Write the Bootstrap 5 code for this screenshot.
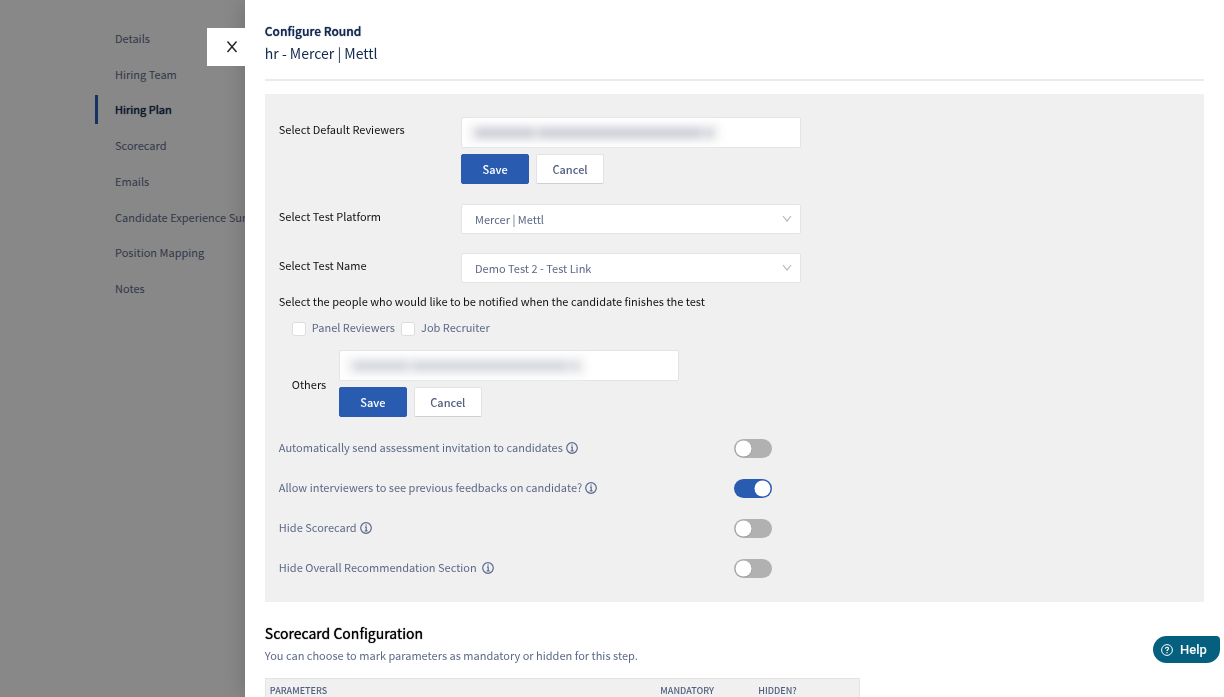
<!DOCTYPE html>
<html lang="en">
<head>
<meta charset="utf-8">
<meta name="viewport" content="width=device-width, initial-scale=1">
<title>Configure Round</title>
<link href="https://cdn.jsdelivr.net/npm/bootstrap@5.3.0/dist/css/bootstrap.min.css" rel="stylesheet">
<style>
:root{--ink:#5c6886;--navy:#13294f;--blue:#295bb1;--line:#e4e4e4}
body{font-family:"Noto Sans CJK SC",sans-serif;font-size:11px;line-height:18px;color:var(--ink);background:#f7f7f7}
button,input,select{font-family:inherit}
.side-menu{margin:24px 0 0 95px;height:279px}
.side-menu .nav-link{height:29px;padding:0 0 0 17px;border-left:3px solid transparent;color:var(--ink);line-height:29px;white-space:nowrap}
.side-menu .nav-link.active{border-left-color:var(--blue);color:var(--navy)}
.strong-text{text-shadow:0 0 1px currentColor}
.offcanvas-backdrop.show{opacity:.45}
.offcanvas.drawer{--bs-offcanvas-width:80%;--bs-offcanvas-border-width:0;--bs-offcanvas-bg:#fff;--bs-offcanvas-color:var(--ink);visibility:visible;transition:none;outline:0;box-shadow:0 0 24px rgba(0,0,0,.2)}
.drawer-close{top:28px;right:100%;width:38px;height:38px;padding:0 0 0 12px}
.drawer-scroll{padding:20px;scrollbar-width:none}
.drawer-scroll::-webkit-scrollbar{display:none}
.drawer-head{padding-bottom:15px;border-bottom:2px solid #ebebeb;color:var(--navy)}
.drawer-head h1{font-size:12px;line-height:22px;font-weight:500;margin:0}
.drawer-head p{font-size:14px;line-height:22px;margin:0}
.config{margin-top:13px;padding:23px 14px 24px;background:#f0f0f0}
.dark-text{color:#111}
.field-name{width:20%;line-height:25px}
.field-box{width:340px;max-width:100%}
.field-line{margin-bottom:19px}
.field-line.tall{margin-bottom:20px}
.field-line.last{margin-bottom:9px}
.tags{height:31px;padding:0 5px;background:#fff;border:1px solid var(--line);border-radius:2px}
.tags input{border:0;outline:0;min-width:0;background:transparent}
.hidden-tag{width:254px;height:20px;padding:0 8px;gap:3px;background:#f6f6f7;filter:blur(4px)}
.hidden-tag i{height:10px;background:#c9ccd4}
.hidden-tag.soft{width:242px}
.hidden-tag.soft i{background:#d2d5dc}
.btn-row{gap:7px;margin-top:6px}
.btn-box{width:68px;height:30px;padding:0;border-radius:2px;font-size:11px;line-height:18px;font-weight:500}
.btn-save{--bs-btn-bg:#295bb1;--bs-btn-border-color:#295bb1;--bs-btn-color:#fff;--bs-btn-hover-bg:#214c96;--bs-btn-hover-color:#fff}
.btn-cancel{--bs-btn-bg:#fff;--bs-btn-border-color:#e2e2e2;--bs-btn-color:#52607f;--bs-btn-hover-bg:#fafafa;border-bottom-color:#cfcfcf}
.pick{height:30px;padding:0 30px 0 13px;border:1px solid var(--line);border-radius:2px;color:var(--ink);font-size:11px;line-height:28px;background-color:#fff;background-size:10px 8px;background-position:right 8px center;
background-image:url("data:image/svg+xml,%3Csvg xmlns='http://www.w3.org/2000/svg' viewBox='0 0 10 8'%3E%3Cpath d='M1 1l4 5 4-5' fill='none' stroke='%23b5b5b5' stroke-width='1.2'/%3E%3C/svg%3E")}
.tick{width:14px;height:14px;margin:4px 0 0;border:1px solid #ddd;border-radius:1px}
.tick-row{gap:6px;margin:8px 0 14px 13px}
.others{margin:0 0 22px 13px}
.others-name{width:47px}
.setting{height:19px;margin-bottom:21px;line-height:16px}
.setting:last-child{margin-bottom:0}
.info{width:12px;height:12px;margin-left:3px;vertical-align:-2px}
.form-check-input.toggle{width:38px;height:19px;margin:0;border:0;background-color:#b1b1b1;background-size:19px 19px;
background-image:url("data:image/svg+xml,%3Csvg xmlns='http://www.w3.org/2000/svg' viewBox='0 0 19 19'%3E%3Ccircle cx='9.5' cy='10' r='8.5' fill='%23999'/%3E%3Ccircle cx='9.5' cy='9.5' r='8' fill='%23fff'/%3E%3C/svg%3E")!important}
.form-check-input.toggle:checked{background-color:var(--blue);
background-image:url("data:image/svg+xml,%3Csvg xmlns='http://www.w3.org/2000/svg' viewBox='0 0 19 19'%3E%3Ccircle cx='9.5' cy='9.5' r='8' fill='%23fff'/%3E%3C/svg%3E")!important}
.score-title{margin:20px 0 2px;font-size:14px;line-height:22px;font-weight:400;color:#000}
.score-table{width:595px;max-width:100%;margin-top:14px;border:1px solid var(--line);table-layout:fixed}
.score-table th{padding:3px 4px 10px;background:#f0f0f0;color:#52607f;font-size:9px;line-height:18px;font-weight:500}
.score-table .name-col{width:391px}
.score-table .mark-col{width:98px}
.help{right:4px;bottom:34px;z-index:1050;width:67px;height:27px;padding:0 0 0 8px;border:0;border-radius:14px 4px 14px 14px;background:#05607f;color:#fff;font:500 13px/27px Roboto,sans-serif;gap:7px}
</style>
</head>
<body>
<nav class="side-menu nav flex-column flex-nowrap justify-content-between" aria-label="Position">
  <a class="nav-link" href="#">Details</a>
  <a class="nav-link" href="#">Hiring Team</a>
  <a class="nav-link active strong-text" href="#" aria-current="page">Hiring Plan</a>
  <a class="nav-link" href="#">Scorecard</a>
  <a class="nav-link" href="#">Emails</a>
  <a class="nav-link" href="#">Candidate Experience Survey</a>
  <a class="nav-link" href="#">Position Mapping</a>
  <a class="nav-link" href="#">Notes</a>
</nav>
<div class="offcanvas-backdrop show"></div>

<section class="offcanvas offcanvas-end show drawer" data-bs-backdrop="false" data-bs-scroll="true" aria-labelledby="drawerTitle">
  <button class="drawer-close btn bg-white border-0 rounded-0 position-absolute d-flex align-items-center justify-content-center" type="button" aria-label="Close">
    <svg width="12" height="12" viewBox="0 0 12 12" fill="none" stroke="#222" stroke-width="1.4"><path d="M1.500 .5l9 10.500M10.500 .5l-9 10.500"/></svg>
  </button>
  <div class="offcanvas-body drawer-scroll">
    <header class="drawer-head">
      <h1 class="strong-text" id="drawerTitle">Configure Round</h1>
      <p>hr - Mercer | Mettl</p>
    </header>

    <form class="config">
      <div class="d-flex field-line tall">
        <label class="field-name dark-text" for="reviewers">Select Default Reviewers</label>
        <div class="field-box">
          <div class="tags d-flex align-items-center">
            <span class="hidden-tag d-flex align-items-center flex-shrink-0"><i class="w-25"></i><i class="flex-fill"></i><i class="px-1"></i></span>
            <input id="reviewers" type="text" class="flex-fill">
          </div>
          <div class="btn-row d-flex">
            <button class="btn btn-box btn-save" type="button">Save</button>
            <button class="btn btn-box btn-cancel" type="button">Cancel</button>
          </div>
        </div>
      </div>
      <div class="d-flex field-line">
        <label class="field-name dark-text" for="platform">Select Test Platform</label>
        <div class="field-box"><select class="form-select pick" id="platform"><option>Mercer | Mettl</option></select></div>
      </div>
      <div class="d-flex field-line last">
        <label class="field-name dark-text" for="testname">Select Test Name</label>
        <div class="field-box"><select class="form-select pick" id="testname"><option>Demo Test 2 - Test Link</option></select></div>
      </div>
      <div class="dark-text">Select the people who would like to be notified when the candidate finishes the test</div>
      <div class="tick-row d-flex">
        <input class="form-check-input tick" type="checkbox" id="panel"><label for="panel">Panel Reviewers</label>
        <input class="form-check-input tick" type="checkbox" id="recruiter"><label for="recruiter">Job Recruiter</label>
      </div>
      <div class="others d-flex align-items-center">
        <label class="others-name dark-text" for="others">Others</label>
        <div class="field-box">
          <div class="tags d-flex align-items-center">
            <span class="hidden-tag soft d-flex align-items-center flex-shrink-0"><i class="w-25"></i><i class="flex-fill"></i><i class="px-1"></i></span>
            <input id="others" type="text" class="flex-fill">
          </div>
          <div class="btn-row d-flex">
            <button class="btn btn-box btn-save" type="button">Save</button>
            <button class="btn btn-box btn-cancel" type="button">Cancel</button>
          </div>
        </div>
      </div>
      <div>
        <div class="setting row gx-0 align-items-start">
          <div class="col-6"><label for="auto">Automatically send assessment invitation to candidates</label><svg class="info" viewBox="0 0 12 12" fill="none" stroke="#5a6a8c"><circle cx="6" cy="6" r="5.300" stroke-width="1.200"/><path d="M5 5.200h1.200v3.600M4.700 8.800h2.900M5.500 3.200h1.200" stroke-width="1.200"/></svg></div>
          <div class="col-6 d-flex form-switch p-0"><input class="form-check-input toggle" type="checkbox" role="switch" id="auto"></div>
        </div>
        <div class="setting row gx-0 align-items-start">
          <div class="col-6"><label for="allow">Allow interviewers to see previous feedbacks on candidate?</label><svg class="info" viewBox="0 0 12 12" fill="none" stroke="#5a6a8c"><circle cx="6" cy="6" r="5.300" stroke-width="1.200"/><path d="M5 5.200h1.200v3.600M4.700 8.800h2.900M5.500 3.200h1.200" stroke-width="1.200"/></svg></div>
          <div class="col-6 d-flex form-switch p-0"><input class="form-check-input toggle" type="checkbox" role="switch" id="allow" checked></div>
        </div>
        <div class="setting row gx-0 align-items-start">
          <div class="col-6"><label for="hidecard">Hide Scorecard</label><svg class="info" viewBox="0 0 12 12" fill="none" stroke="#5a6a8c"><circle cx="6" cy="6" r="5.300" stroke-width="1.200"/><path d="M5 5.200h1.200v3.600M4.700 8.800h2.900M5.500 3.200h1.200" stroke-width="1.200"/></svg></div>
          <div class="col-6 d-flex form-switch p-0"><input class="form-check-input toggle" type="checkbox" role="switch" id="hidecard"></div>
        </div>
        <div class="setting row gx-0 align-items-start">
          <div class="col-6"><label for="hiderec">Hide Overall Recommendation Section</label> <svg class="info" viewBox="0 0 12 12" fill="none" stroke="#5a6a8c"><circle cx="6" cy="6" r="5.300" stroke-width="1.200"/><path d="M5 5.200h1.200v3.600M4.700 8.800h2.900M5.500 3.200h1.200" stroke-width="1.200"/></svg></div>
          <div class="col-6 d-flex form-switch p-0"><input class="form-check-input toggle" type="checkbox" role="switch" id="hiderec"></div>
        </div>
      </div>
    </form>

    <h2 class="score-title strong-text">Scorecard Configuration</h2>
    <div>You can choose to mark parameters as mandatory or hidden for this step.</div>
    <table class="score-table">
      <thead><tr><th class="name-col">PARAMETERS</th><th class="mark-col">MANDATORY</th><th>HIDDEN?</th></tr></thead>
    </table>
  </div>
</section>

<button class="help position-fixed d-flex align-items-center" type="button">
  <svg width="12" height="12" viewBox="0 0 12 12" fill="none" stroke="#fff"><circle cx="6" cy="6" r="5.400"/><path d="M4.500 4.800c0-2 3-2 3-.2 0 1.100-1.500 1-1.500 2.300M6 8v1.200" stroke-width="1.200"/></svg>Help
</button>
<script src="https://cdn.jsdelivr.net/npm/bootstrap@5.3.0/dist/js/bootstrap.bundle.min.js"></script>
</body>
</html>
